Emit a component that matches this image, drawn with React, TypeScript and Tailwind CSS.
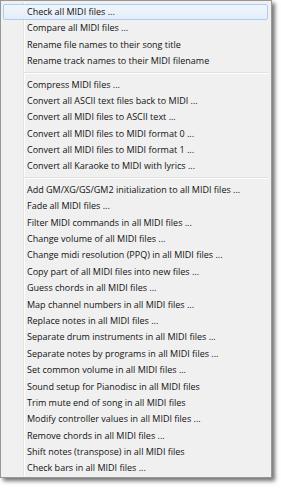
const groups: string[][] = [
  [
    "Check all MIDI files ...",
    "Compare all MIDI files ...",
    "Rename file names to their song title",
    "Rename track names to their MIDI filename",
  ],
  [
    "Compress MIDI files ...",
    "Convert all ASCII text files back to MIDI ...",
    "Convert all MIDI files to ASCII text ...",
    "Convert all MIDI files to MIDI format 0 ...",
    "Convert all MIDI files to MIDI format 1 ...",
    "Convert all Karaoke to MIDI with lyrics ...",
  ],
  [
    "Add GM/XG/GS/GM2 initialization to all MIDI files ...",
    "Fade all MIDI files ...",
    "Filter MIDI commands in all MIDI files ...",
    "Change volume of all MIDI files ...",
    "Change midi resolution (PPQ) in all MIDI files ...",
    "Copy part of all MIDI files into new files ...",
    "Guess chords in all MIDI files ...",
    "Map channel numbers in all MIDI files ...",
    "Replace notes in all MIDI files ...",
    "Separate drum instruments in all MIDI files ...",
    "Separate notes by programs in all MIDI files ...",
    "Set common volume in all MIDI files ...",
    "Sound setup for Pianodisc in all MIDI files",
    "Trim mute end of song in all MIDI files",
    "Modify controller values in all MIDI files ...",
    "Remove chords in all MIDI files ...",
    "Shift notes (transpose) in all MIDI files",
    "Check bars in all MIDI files ...",
  ],
];

function MenuItem({ label, active }: { label: string; active?: boolean }) {
  return (
    <div
      className={`flex h-[16.4px] items-center rounded-[2px] border pl-[23px] ${
        active
          ? "border-[#a8d0f5] bg-gradient-to-b from-[#f2f6fc] to-[#e4edf8]"
          : "border-transparent"
      }`}
    >
      <span className="whitespace-nowrap">{label}</span>
    </div>
  );
}

export default function App() {
  return (
    <div className="h-[488px] w-[281px] overflow-hidden bg-white">
      <div
        className="relative h-[478px] w-[272px] border border-[#979797] bg-[#f0f0f0] p-[2px] text-[9px] text-[#111] shadow-[3px_3px_4px_rgba(0,0,0,0.55)]"
        style={{ fontFamily: '"Open Sans", "Noto Sans", sans-serif' }}
      >
        {/* gutter line */}
        <div className="absolute top-[1px] bottom-[1px] left-[22px] flex">
          <div className="h-full w-[1px] bg-[#e2e3e3]" />
          <div className="h-full w-[1px] bg-white" />
        </div>
        <div className="relative flex flex-col pt-[0.5px] pr-[1px]">
          {groups.map((group, gi) => (
            <div key={gi} className="flex flex-col">
              {gi > 0 && (
                <div className="flex h-[7px] items-center pl-[21px]">
                  <div className="w-full border-t border-b border-t-[#e0e0e0] border-b-white" />
                </div>
              )}
              {group.map((label, i) => (
                <MenuItem key={label} label={label} active={gi === 0 && i === 0} />
              ))}
            </div>
          ))}
        </div>
      </div>
    </div>
  );
}
